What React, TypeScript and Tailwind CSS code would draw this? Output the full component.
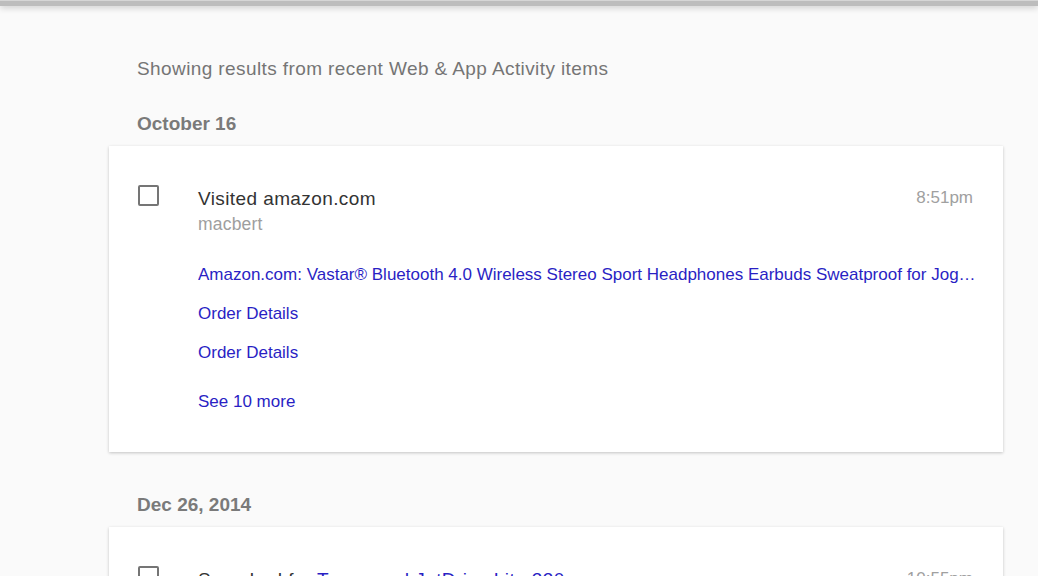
import React from 'react';

type Activity = {
  title: React.ReactNode;
  sub?: string;
  time: string;
  links?: string[];
  more?: string;
};

const groups: { date: string; items: Activity[] }[] = [
  {
    date: 'October 16',
    items: [
      {
        title: 'Visited amazon.com',
        sub: 'macbert',
        time: '8:51pm',
        links: [
          'Amazon.com: Vastar® Bluetooth 4.0 Wireless Stereo Sport Headphones Earbuds Sweatproof for Jogging, Running, Gym with Mic',
          'Order Details',
          'Order Details',
        ],
        more: 'See 10 more',
      },
    ],
  },
  {
    date: 'Dec 26, 2014',
    items: [
      {
        title: (
          <>
            Searched for <span className="text-[#2a1fc4]">Transcend JetDrive Lite 330</span>
          </>
        ),
        time: '10:55pm',
      },
    ],
  },
];

const ActivityCard = ({ item }: { item: Activity }) => (
  <div className="bg-white shadow-[0_1px_3px_rgba(0,0,0,0.22)] pl-[29px] pr-[30px] pt-[39px] pb-[39px]">
    <div className="flex">
      {/* checkbox */}
      <div className="w-[21px] h-[21px] shrink-0 border-2 border-[#757575] rounded-[2px]" />
      <div className="ml-[39px] flex-1 min-w-0 pt-[2px]">
        <div className="flex justify-between items-start">
          <div className="text-[19px] leading-[24px] tracking-[0.4px] text-[#333333]">{item.title}</div>
          <div className="text-[17px] leading-[22px] text-[#a0a0a0]">{item.time}</div>
        </div>
        {item.sub && (
          <div className="text-[17.5px] leading-[20px] tracking-[0.2px] text-[#9e9e9e] mt-[3px]">{item.sub}</div>
        )}
        {item.links && (
          <div className="mt-[30px] flex flex-col gap-[17px]">
            {item.links.map((l, i) => (
              <div key={i} className="text-[17px] leading-[22px] text-[#2a1fc4] truncate mr-[-4px]">
                {l}
              </div>
            ))}
          </div>
        )}
        {item.more && (
          <div className="mt-[27px] text-[17px] leading-[22px] text-[#2a1fc4]">{item.more}</div>
        )}
      </div>
    </div>
  </div>
);

export default function App() {
  return (
    <div className="h-[576px] overflow-hidden bg-[#fafafa] font-['Liberation_Sans',Arial,sans-serif]">
      {/* bottom edge of the app bar */}
      <div className="h-[6px] bg-[#bdbdbd] border-t border-[#d6d6d6] shadow-[0_2px_6px_rgba(0,0,0,0.18)]" />

      <div className="ml-[109px] w-[894px]">
        <div className="pl-[28px] mt-[51px] text-[19px] leading-[24px] tracking-[0.4px] text-[#757575]">
          Showing results from recent Web &amp; App Activity items
        </div>

        {groups.map((g, gi) => (
          <div key={gi} className={gi === 0 ? 'mt-[31px]' : 'mt-[41px]'}>
            <div className="pl-[28px] text-[19px] leading-[24px] font-bold text-[#7a7a7a]">{g.date}</div>
            <div className="mt-[10px] flex flex-col gap-4">
              {g.items.map((it, ii) => (
                <ActivityCard key={ii} item={it} />
              ))}
            </div>
          </div>
        ))}
      </div>
    </div>
  );
}
